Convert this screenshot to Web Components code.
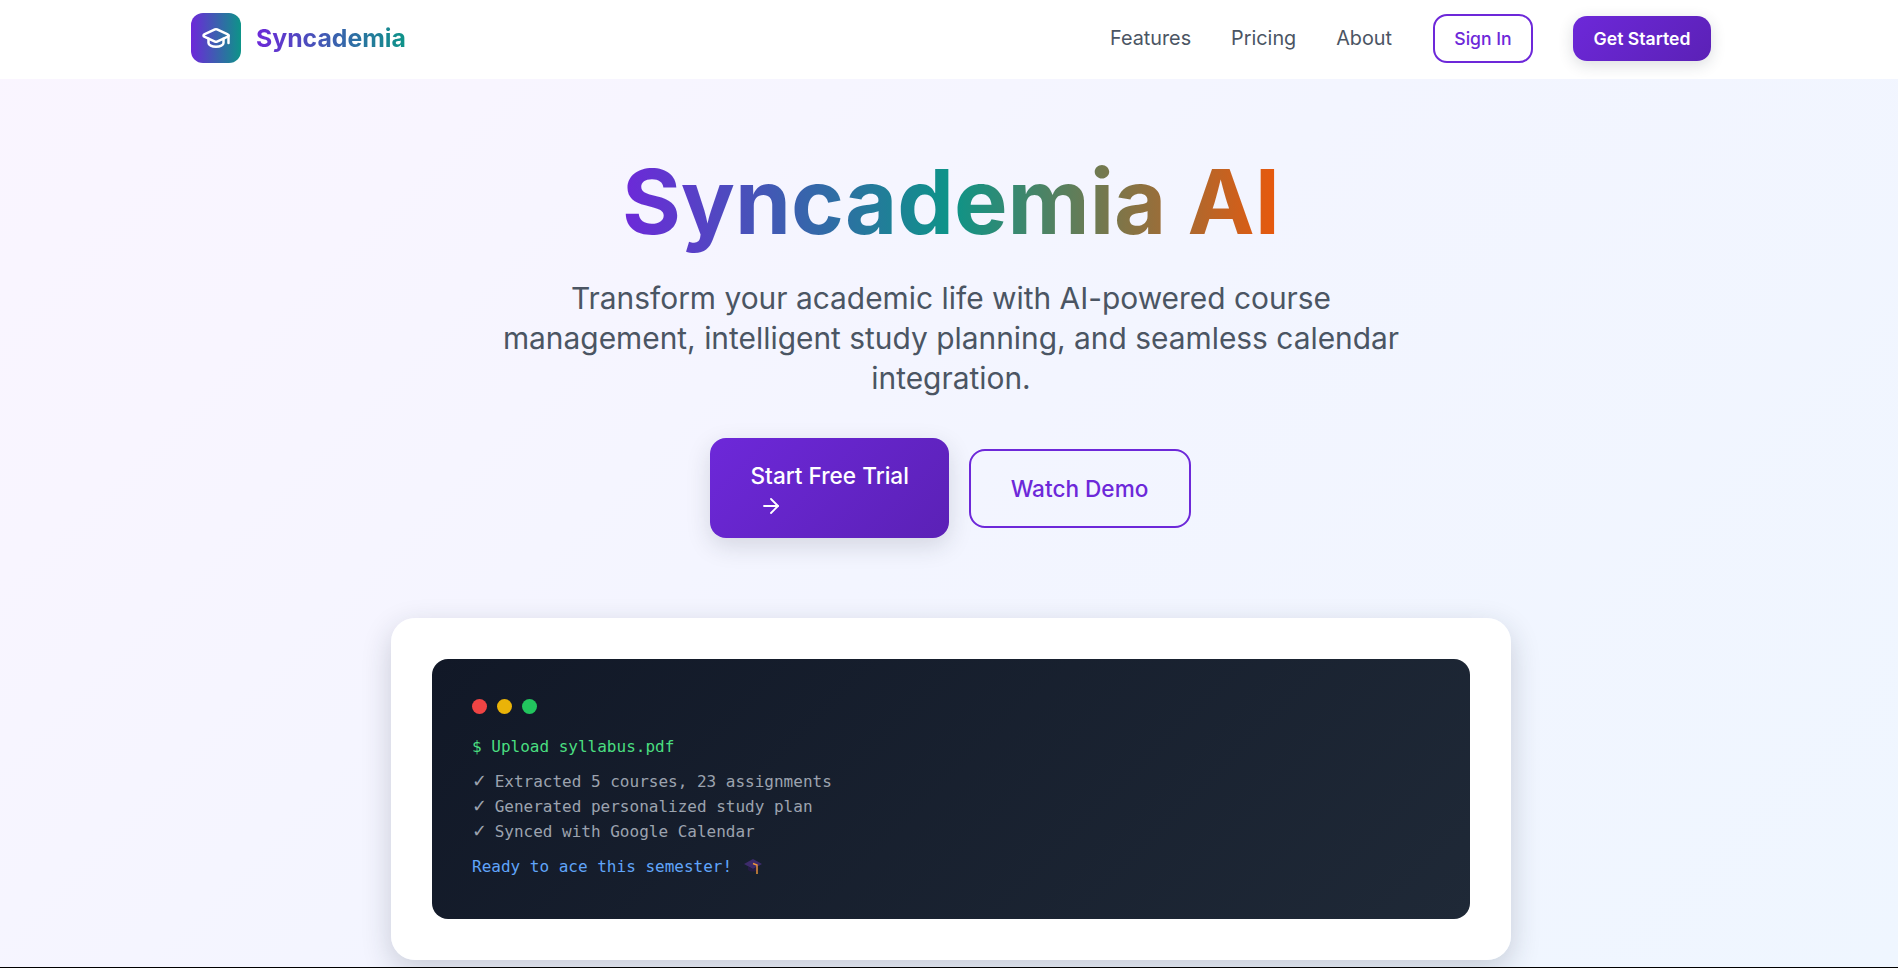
<!DOCTYPE html>
<html>
<head>
<meta charset="utf-8">
<title>Syncademia</title>
<style>
  html, body { margin: 0; }
  body {
    height: 968px;
    overflow: hidden;
    font-family: "Inter", sans-serif;
    background: #000;
  }
  .page {
    height: 967px;
    overflow: hidden;
    background: linear-gradient(135deg, #faf5ff 0%, #f8f5ff 20%, #f3f5ff 50%, #eff6ff 100%);
  }
</style>
</head>
<body>
<div class="page">
  <site-nav></site-nav>
  <hero-section>
    <terminal-demo slot="demo"></terminal-demo>
  </hero-section>
</div>

<script>
class SiteNav extends HTMLElement {
  constructor() {
    super();
    this.attachShadow({ mode: "open" });
    this.shadowRoot.innerHTML = `
      <style>
        * { box-sizing: border-box; }
        :host {
          display: block;
          height: 79px;
          background: rgba(255, 255, 255, 0.95);
          padding: 0 187px 0 191px;
        }
        .bar {
          display: flex;
          align-items: center;
          justify-content: space-between;
          height: 76px;
        }
        .logo { display: flex; align-items: center; gap: 15px; }
        .mark {
          width: 50px;
          height: 50px;
          border-radius: 12px;
          background: linear-gradient(90deg, #6d28d9, #0d9488);
          display: flex;
          align-items: center;
          justify-content: center;
        }
        .name {
          font-size: 24.8px;
          font-weight: 700;
          background: linear-gradient(90deg, #6d28d9, #0d9488);
          -webkit-background-clip: text;
          background-clip: text;
          color: transparent;
        }
        .links { display: flex; align-items: center; }
        a {
          font-size: 19.8px;
          color: #4b5563;
          text-decoration: none;
          margin-right: 40px;
        }
        .signin, .start {
          font-family: inherit;
          font-size: 17.6px;
          border-radius: 14px;
        }
        .signin {
          width: 100px;
          height: 49px;
          font-weight: 500;
          color: #6d28d9;
          background: none;
          border: 2px solid #6d28d9;
          margin: 0 40px 0 1px;
        }
        .start {
          width: 138px;
          height: 45px;
          font-weight: 600;
          color: #fff;
          border: none;
          background: linear-gradient(135deg, #6d28d9, #5b21b6);
          box-shadow: 0 4px 15px rgba(31, 41, 55, 0.16);
        }
      </style>
      <div class="bar">
        <div class="logo">
          <div class="mark">
            <svg width="30" height="30" viewBox="0 0 24 24" fill="none" stroke="#fff" stroke-width="2" stroke-linecap="round" stroke-linejoin="round">
              <path d="M21.42 10.92a1 1 0 0 0-.02-1.84L12.83 5.18a2 2 0 0 0-1.66 0L2.6 9.08a1 1 0 0 0 0 1.83l8.57 3.91a2 2 0 0 0 1.66 0z"/>
              <path d="M22 10v6"/>
              <path d="M6 12.5V16a6 3 0 0 0 12 0v-3.5"/>
            </svg>
          </div>
          <span class="name">Syncademia</span>
        </div>
        <div class="links">
          <a href="#">Features</a>
          <a href="#">Pricing</a>
          <a href="#">About</a>
          <button class="signin">Sign In</button>
          <button class="start">Get Started</button>
        </div>
      </div>
    `;
  }
}

class HeroSection extends HTMLElement {
  constructor() {
    super();
    this.attachShadow({ mode: "open" });
    this.shadowRoot.innerHTML = `
      <style>
        * { box-sizing: border-box; }
        :host {
          display: flex;
          flex-direction: column;
          align-items: center;
          padding-top: 70px;
          padding-left: 4px;
        }
        h1 {
          margin: 0;
          font-size: 90px;
          line-height: 105.6px;
          font-weight: 700;
          background: linear-gradient(90deg, #6d28d9 0%, #0d9488 50%, #ea580c 100%);
          -webkit-background-clip: text;
          background-clip: text;
          color: transparent;
        }
        p {
          width: 905px;
          margin: 23px 0 0;
          text-align: center;
          font-size: 29.9px;
          line-height: 40px;
          color: #4b5563;
        }
        .actions {
          display: flex;
          align-items: flex-start;
          gap: 20px;
          margin: 40px 2px 0 0;
        }
        button { font-family: inherit; font-size: 22.6px; font-weight: 500; border-radius: 16px; }
        .trial {
          display: block;
          width: 239px;
          padding: 24px 40px 20px 41px;
          text-align: left;
          color: #fff;
          border: none;
          background: linear-gradient(135deg, #6d28d9, #5b21b6);
          box-shadow: 0 8px 25px rgba(31, 41, 55, 0.15);
        }
        .trial span { display: block; line-height: 28px; white-space: nowrap; }
        .trial svg { display: block; margin: 4px 0 0 8px; }
        .demo {
          width: 222px;
          height: 79px;
          margin-top: 11px;
          color: #6d28d9;
          background: none;
          border: 2px solid #6d28d9;
        }
        .card {
          width: 1120px;
          margin-top: 80px;
          padding: 41px;
          background: rgba(255, 255, 255, 0.95);
          border-radius: 24px;
          box-shadow: 0 10px 30px rgba(31, 41, 55, 0.2);
        }
      </style>
      <h1>Syncademia AI</h1>
      <p>Transform your academic life with AI-powered course management, intelligent study planning, and seamless calendar integration.</p>
      <div class="actions">
        <button class="trial"><span>Start Free Trial</span>
          <svg width="24" height="24" viewBox="0 0 24 24" fill="none" stroke="#fff" stroke-width="1.8" stroke-linecap="round" stroke-linejoin="round"><path d="M5 12h14"/><path d="m12 5 7 7-7 7"/></svg>
        </button>
        <button class="demo">Watch Demo</button>
      </div>
      <div class="card"><slot name="demo"></slot></div>
    `;
  }
}

class TerminalDemo extends HTMLElement {
  constructor() {
    super();
    this.attachShadow({ mode: "open" });
    this.shadowRoot.innerHTML = `
      <style>
        * { box-sizing: border-box; }
        :host {
          display: block;
          box-sizing: border-box;
          height: 260px;
          padding: 40px;
          border-radius: 16px;
          background: linear-gradient(135deg, #111827, #1f2937);
          font-family: "DejaVu Sans Mono", monospace;
          font-size: 16px;
          line-height: 25px;
          color: #9ca3af;
        }
        .dots { display: flex; gap: 10px; margin-bottom: 20px; }
        .dots i { width: 15px; height: 15px; border-radius: 50%; }
        .green { color: #4ade80; margin-bottom: 10px; }
        .tick { display: inline-block; width: 13px; font-family: "DejaVu Sans", sans-serif; font-size: 18px; line-height: 20px; }
        .blue { color: #60a5fa; margin-top: 10px; display: flex; align-items: center; gap: 12px; }
      </style>
      <div class="dots">
        <i style="background:#ef4444"></i><i style="background:#eab308"></i><i style="background:#22c55e"></i>
      </div>
      <div class="green">$ Upload syllabus.pdf</div>
      <div><span class="tick">✓</span> Extracted 5 courses, 23 assignments</div>
      <div><span class="tick">✓</span> Generated personalized study plan</div>
      <div><span class="tick">✓</span> Synced with Google Calendar</div>
      <div class="blue">Ready to ace this semester!
        <svg width="18" height="17" viewBox="0 0 18 17">
          <path d="M0 6 9 1l9 5-9 5z" fill="#3d2b6b"/>
          <path d="M4 8.5V12c2 2 8 2 10 0V8.5L9 11z" fill="#241b44"/>
          <path d="M9 5.5l4 1.5v9" fill="none" stroke="#f0963a" stroke-width="1.4"/>
        </svg>
      </div>
    `;
  }
}

customElements.define("site-nav", SiteNav);
customElements.define("hero-section", HeroSection);
customElements.define("terminal-demo", TerminalDemo);
</script>
</body>
</html>
